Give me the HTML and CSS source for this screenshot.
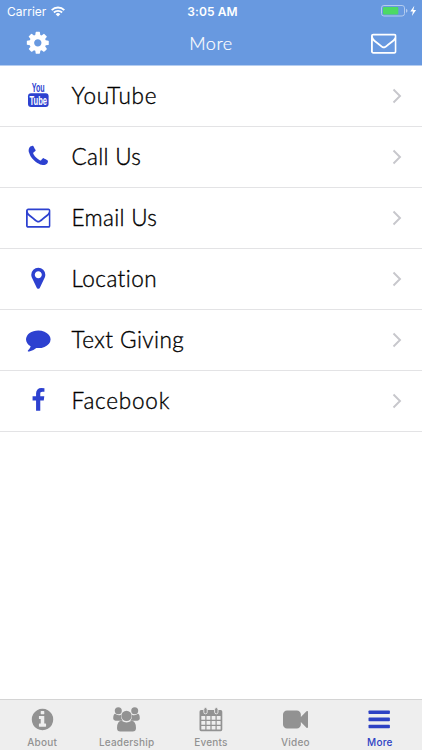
FILE: index.html
```html
<!DOCTYPE html>
<html lang="en">
<head>
  <meta charset="UTF-8" />
  <meta name="viewport" content="width=device-width, initial-scale=1.0"/>
  <title>More</title>
  <link rel="stylesheet" href="styles.css">
</head>
<body>
  <!-- Icon shapes used more than once -->
  <svg class="defs">
    <symbol id="envelope" viewBox="0 0 1792 1792">
      <path d="M1664 1504v-768q-32 36-69 66-268 206-426 338-51 43-83 67t-86.500 48.500-102.500 24.500h-2q-48 0-102.500-24.500t-86.500-48.500-83-67q-158-132-426-338-37-30-69-66v768q0 13 9.500 22.500t22.500 9.500h1472q13 0 22.500-9.500t9.500-22.500zm0-1051v-24.500l-.5-13-3-12.500-5.500-9-9-7.500-14-2.500h-1472q-13 0-22.500 9.500t-9.500 22.500q0 168 147 284 193 152 401 317 6 5 35 29.500t46 37.500 44.500 31.500 50.500 27.500 43 9h2q20 0 43-9t50.500-27.500 44.500-31.500 46-37.500 35-29.500q208-165 401-317 54-43 100.500-115.500t46.500-131.500zm128-37v1088q0 66-47 113t-113 47h-1472q-66 0-113-47t-47-113v-1088q0-66 47-113t113-47h1472q66 0 113 47t47 113z"/>
    </symbol>
    <symbol id="chevron" viewBox="0 0 10 16">
      <path d="M1.500 1.500L8 8l-6.500 6.500" fill="none" stroke="#c7c7cc" stroke-width="1.900"/>
    </symbol>
  </svg>

  <div class="app">
    <header>
      <div class="status">
        <div class="carrier">
          <span>Carrier</span>
          <svg class="wifi" viewBox="0 0 14 11">
            <g fill="none" stroke="#fff" stroke-width="1.900">
              <path d="M.7 4.100a9 9 0 0 1 12.600 0"/>
              <path d="M2.900 6.500a5.900 5.900 0 0 1 8.200 0"/>
            </g>
            <path d="M4.700 8.200a3.300 3.300 0 0 1 4.600 0L7 10.500z" fill="#fff"/>
          </svg>
        </div>
        <span class="time">3:05 AM</span>
        <svg class="battery" viewBox="0 0 37 12">
          <rect x=".5" y=".5" width="23" height="10.500" rx="2.400" fill="none" stroke="#b4ccef"/>
          <rect x="2" y="2" width="15.300" height="7.500" rx="1" fill="#4cd964"/>
          <path d="M25 3.800q1.500.5 1.500 2t-1.500 2z" fill="#b4ccef"/>
          <path d="M33.300.8L29.300 6.600h2.600l-1 4.400 4.200-6h-2.700z" fill="#fff"/>
        </svg>
      </div>
      <div class="navbar">
        <svg class="nav-icon" viewBox="0 0 1792 1792"><path d="M1152 896q0-106-75-181t-181-75-181 75-75 181 75 181 181 75 181-75 75-181zm512-109v222q0 12-8 23t-20 13l-185 28q-19 54-39 91 35 50 107 138 10 12 10 25t-9 23q-27 37-99 108t-94 71q-12 0-26-9l-138-108q-44 23-91 38-16 136-29 186-7 28-36 28h-222q-14 0-24.500-8.500t-11.500-21.500l-28-184q-49-16-90-37l-141 107q-10 9-25 9-14 0-25-11-126-114-165-168-7-10-7-23 0-12 8-23 15-21 51-66.500t54-70.500q-27-50-41-99l-183-27q-13-2-21-12.500t-8-23.500v-222q0-12 8-23t19-13l186-28q14-46 39-92-40-57-107-138-10-12-10-24 0-10 9-23 26-36 98.500-107.500t94.500-71.500q13 0 26 10l138 107q44-23 91-38 16-136 29-186 7-28 36-28h222q14 0 24.500 8.500t11.500 21.500l28 184q49 16 90 37l142-107q9-9 24-9 13 0 25 10 129 119 165 170 7 8 7 22 0 12-8 23-15 21-51 66.500t-54 70.500q26 50 41 98l183 28q13 2 21 12.500t8 23.500z"/></svg>
        <h1>More</h1>
        <svg class="nav-icon"><use href="#envelope"/></svg>
      </div>
    </header>

    <ul class="menu">
      <li>
        <svg class="icon" viewBox="0 0 24.600 24.600">
          <text x="5.700" y="8.900" font-size="12.500" textLength="13" lengthAdjust="spacingAndGlyphs">You</text>
          <rect x="2" y="10.300" width="20.600" height="13.700" rx="3"/>
          <text class="tube" x="3.500" y="21.600" font-size="12" textLength="17.600" lengthAdjust="spacingAndGlyphs">Tube</text>
        </svg>
        <span class="label wide">YouTube</span>
        <svg class="chevron"><use href="#chevron"/></svg>
      </li>
      <li>
        <svg class="icon" viewBox="0 0 1792 1792"><path d="M1600 1240q0 27-10 70.500t-21 68.500q-21 50-122 106-94 51-186 51-27 0-53-3.500t-57.500-12.500-47-14.500-55.500-20.500-49-18q-98-35-175-83-127-79-264-216t-216-264q-48-77-83-175-3-9-18-49t-20.500-55.500-14.500-47-12.500-57.500-3.500-53q0-92 51-186 56-101 106-122 25-11 68.500-21t70.500-10q14 0 21 3 18 6 53 76 11 19 30 54t35 63.500 31 53.500q3 4 17.500 25t21.500 35.500 7 28.500q0 20-28.500 50t-62 55-62 53-28.500 46q0 9 5 22.500t8.500 20.500 14 24 11.500 19q76 137 174 235t235 174q2 1 19 11.500t24 14 20.500 8.500 22.500 5q18 0 46-28.500t53-62 55-62 50-28.500q14 0 28.500 7t35.500 21.500 25 17.500q25 15 53.500 31t63.500 35 54 30q70 35 76 53 3 7 3 21z"/></svg>
        <span class="label narrow">Call Us</span>
        <svg class="chevron"><use href="#chevron"/></svg>
      </li>
      <li>
        <svg class="icon"><use href="#envelope"/></svg>
        <span class="label narrow">Email Us</span>
        <svg class="chevron"><use href="#chevron"/></svg>
      </li>
      <li>
        <svg class="icon" viewBox="0 0 1792 1792"><path d="M1152 640q0-106-75-181t-181-75-181 75-75 181 75 181 181 75 181-75 75-181zm256 0q0 109-33 179l-364 774q-16 33-47.500 52t-67.500 19-67.500-19-46.500-52l-365-774q-33-70-33-179 0-212 150-362t362-150 362 150 150 362z"/></svg>
        <span class="label">Location</span>
        <svg class="chevron"><use href="#chevron"/></svg>
      </li>
      <li>
        <svg class="icon" viewBox="0 0 1792 1792"><path d="M1792 896q0 174-120 321.500t-326 233-450 85.500q-70 0-145-8-198 175-460 242-49 14-114 22-17 2-30.500-9t-17.500-29v-1q-3-4-.5-12t2-10 4.500-9.500l6-9 7-8.500 8-9q7-8 31-34.500t34.500-38 31-39.500 32.500-51 27-59 26-76q-157-89-247.500-220t-90.500-281q0-130 71-248.500t191-204.500 286-136.500 348-50.500q244 0 450 85.500t326 233 120 321.500z"/></svg>
        <span class="label">Text Giving</span>
        <svg class="chevron"><use href="#chevron"/></svg>
      </li>
      <li>
        <svg class="icon" viewBox="0 0 1792 1792"><path d="M1343 12v264h-157q-86 0-116 36t-30 108v189h293l-39 296h-254v759h-306v-759h-255v-296h255v-218q0-186 104-288.500t277-102.500q147 0 228 12z"/></svg>
        <span class="label wide">Facebook</span>
        <svg class="chevron"><use href="#chevron"/></svg>
      </li>
    </ul>

    <nav class="tabs">
      <a class="tab">
        <svg viewBox="0 0 1792 1792"><path d="M1152 1376v-160q0-14-9-23t-23-9h-96v-512q0-14-9-23t-23-9h-320q-14 0-23 9t-9 23v160q0 14 9 23t23 9h96v320h-96q-14 0-23 9t-9 23v160q0 14 9 23t23 9h448q14 0 23-9t9-23zm-128-896v-160q0-14-9-23t-23-9h-192q-14 0-23 9t-9 23v160q0 14 9 23t23 9h192q14 0 23-9t9-23zm640 416q0 209-103 385.500t-279.500 279.500-385.500 103-385.500-103-279.500-279.500-103-385.500 103-385.500 279.500-279.500 385.500-103 385.500 103 279.500 279.500 103 385.500z"/></svg>
        <span>About</span>
      </a>
      <a class="tab">
        <svg class="users" viewBox="0 0 27 25">
          <circle cx="5.300" cy="3.700" r="3.500"/>
          <circle cx="21.700" cy="3.700" r="3.500"/>
          <path d="M2 6.800q3.300 2.400 6 .9-.6 3.600 1.700 6H2.600Q.2 13.700.2 11.600.2 7.600 2 6.800z"/>
          <path d="M25 6.800q-3.300 2.400-6 .9.600 3.600-1.700 6h7.100q2.400 0 2.400-2.100 0-4-1.800-4.800z"/>
          <circle cx="13.500" cy="8.900" r="5.200"/>
          <path d="M8.600 13.700q4.900 3.500 9.800 0 4.600.3 4.600 7.300 0 3.600-3.400 3.600H7.400Q4 24.600 4 21q0-7 4.600-7.300z"/>
        </svg>
        <span>Leadership</span>
      </a>
      <a class="tab">
        <svg viewBox="0 0 25 25">
          <path fill-rule="evenodd" d="M2.100 3h19.600q1.600 0 1.600 1.700v17.800q0 1.700-1.600 1.700H2.100Q.5 24.200.5 22.500V4.700Q.5 3 2.100 3zM2.300 9v3.800h4V9zm5.200 0v3.800h3.900V9zm5.100 0v3.800h3.900V9zm5.100 0v3.800h3.900V9zM2.300 13.900v3.900h4v-3.900zm5.200 0v3.900h3.900v-3.900zm5.100 0v3.900h3.900v-3.900zm5.100 0v3.900h3.900v-3.900zM2.300 18.900v3.600h4v-3.600zm5.200 0v3.600h3.900v-3.600zm5.100 0v3.600h3.900v-3.600zm5.100 0v3.600h3.900v-3.600z"/>
          <rect class="ring" x="4.800" y=".6" width="3.400" height="6.200" rx="1.600"/>
          <rect class="ring" x="15.600" y=".6" width="3.400" height="6.200" rx="1.600"/>
        </svg>
        <span>Events</span>
      </a>
      <a class="tab">
        <svg viewBox="0 0 1792 1792"><path d="M1792 352v1088q0 42-39 59-13 5-25 5-27 0-45-19l-403-403v166q0 119-84.500 203.500t-203.500 84.500h-704q-119 0-203.500-84.500t-84.500-203.500v-704q0-119 84.500-203.500t203.500-84.500h704q119 0 203.500 84.500t84.500 203.500v165l403-402q18-19 45-19 12 0 25 5 39 17 39 59z"/></svg>
        <span>Video</span>
      </a>
      <a class="tab active">
        <svg viewBox="0 0 25 25">
          <rect x="1.500" y="3.500" width="21.400" height="3.600" rx=".8"/>
          <rect x="1.500" y="10.600" width="21.400" height="3.600" rx=".8"/>
          <rect x="1.500" y="17.700" width="21.400" height="3.600" rx=".8"/>
        </svg>
        <span>More</span>
      </a>
    </nav>
  </div>
</body>
</html>
```
FILE: styles.css
```css
* {
  box-sizing: border-box;
}

body {
  margin: 0;
  font-family: Inter, "Liberation Sans", sans-serif;
  background: #fff;
}

svg {
  display: block;
  flex-shrink: 0;
}

.defs {
  display: none;
}

.app {
  display: flex;
  flex-direction: column;
  height: 750px;
}

header {
  height: 66px;
  background: #6899e0;
  border-bottom: 1px solid #b5cdf0;
  color: #fff;
}

.status {
  display: grid;
  grid-template-columns: 1fr auto 1fr;
  align-items: center;
  height: 22px;
  padding: 0 4px 0 7px;
  font-size: 12px;
}

.carrier {
  display: flex;
  align-items: center;
  gap: 5px;
}

.wifi {
  width: 14px;
  height: 11px;
}

.time {
  font-weight: 600;
  letter-spacing: 0.1px;
}

.battery {
  width: 37px;
  height: 12px;
  justify-self: end;
}

.navbar {
  display: flex;
  align-items: center;
  justify-content: space-between;
  height: 43px;
  padding: 0 25px 1px;
}

.nav-icon {
  width: 25.6px;
  height: 25.6px;
  fill: #fff;
}

h1 {
  margin: 0;
  padding-bottom: 1px;
  font: 300 18px Lato, sans-serif;
  letter-spacing: 0.5px;
  -webkit-text-stroke: 0.2px #fff;
}

.menu {
  flex: 1;
  margin: 0;
  padding: 0;
  list-style: none;
}

.menu li {
  display: flex;
  align-items: center;
  height: 61px;
  padding: 0 20px 1px 26px;
  border-bottom: 1px solid #e3e3e5;
}

.icon {
  width: 24.6px;
  height: 24.6px;
  overflow: visible;
  fill: #2d41d0;
  font-family: "Liberation Sans", sans-serif;
  font-weight: bold;
}

.tube {
  fill: #fff;
}

.label {
  flex: 1;
  margin-left: 21px;
  padding-bottom: 1px;
  font: 300 22.5px Lato, sans-serif;
  font-variant-ligatures: none;
  letter-spacing: 0.45px;
  color: #000;
  -webkit-text-stroke: 0.35px #000;
}

.wide {
  letter-spacing: 0.8px;
}

.narrow {
  letter-spacing: 0.3px;
}

.chevron {
  width: 10px;
  height: 16px;
}

.tabs {
  display: flex;
  height: 51px;
  background: #eee;
  border-top: 1px solid #d4d4d4;
}

.tab {
  flex: 1;
  display: flex;
  flex-direction: column;
  align-items: center;
  padding-top: 7px;
  font-size: 10px;
  line-height: 12px;
  font-weight: 500;
  letter-spacing: 0.2px;
  color: #929292;
  fill: #929292;
}

.tab svg {
  width: 25px;
  height: 25px;
  margin-bottom: 4px;
}

.tab .users {
  width: 27px;
}

.ring {
  stroke: #eee;
  stroke-width: 0.9;
}

.active {
  color: #2d41c4;
  fill: #2d41c4;
}
```
